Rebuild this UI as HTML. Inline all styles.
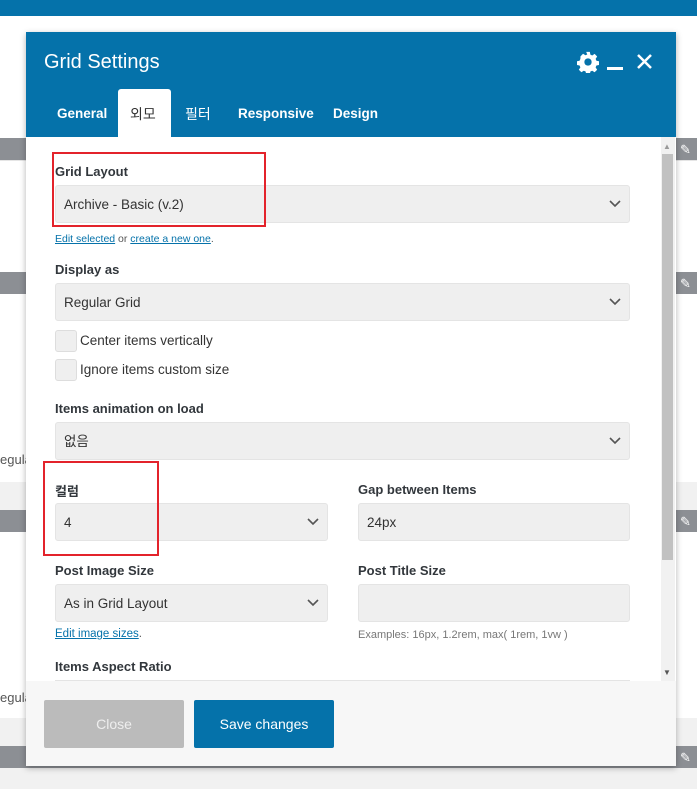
<!DOCTYPE html>
<html><head><style>
body{margin:0;width:697px;height:789px;position:relative;overflow:hidden;background:#f1f1f1;font-family:"Liberation Sans","Noto Sans CJK KR",sans-serif;}
.a{position:absolute}
.lbl{position:absolute;font-size:13px;font-weight:bold;color:#32373c}
.sel{position:absolute;background:#efefef;border:1px solid #e4e4e4;border-radius:3px;height:38px;box-sizing:border-box;font-size:13.5px;color:#333;line-height:38px;padding-left:8px}
.sel svg{position:absolute;right:8px;top:14px}
a{color:#0572aa;text-decoration:underline}
</style></head><body>
<div class="a" style="left:0;top:0;width:697px;height:16px;background:#0572aa"></div>
<div class="a" style="left:0;top:16px;width:697px;height:122px;background:#fff"></div>
<div class="a" style="left:0;top:138px;width:697px;height:22px;background:#8c8f94"></div>
<div class="a" style="left:0;top:160px;width:697px;height:112px;background:#fff;border-top:1px solid #e5e5e5"></div>
<div class="a" style="left:0;top:272px;width:697px;height:22px;background:#8c8f94"></div>
<div class="a" style="left:0;top:294px;width:697px;height:216px;background:#fff"></div>
<div class="a" style="left:0;top:452px;font-size:13px;color:#555">egula</div>
<div class="a" style="left:0;top:482px;width:697px;height:28px;background:#f1f1f1"></div>
<div class="a" style="left:0;top:510px;width:697px;height:22px;background:#8c8f94"></div>
<div class="a" style="left:0;top:532px;width:697px;height:214px;background:#fff"></div>
<div class="a" style="left:0;top:690px;font-size:13px;color:#555">egula</div>
<div class="a" style="left:0;top:718px;width:697px;height:28px;background:#f1f1f1"></div>
<div class="a" style="left:0;top:746px;width:697px;height:22px;background:#8c8f94"></div>
<div class="a" style="left:680px;top:142px;color:#fff;font-size:13px">✎</div>
<div class="a" style="left:680px;top:276px;color:#fff;font-size:13px">✎</div>
<div class="a" style="left:680px;top:514px;color:#fff;font-size:13px">✎</div>
<div class="a" style="left:680px;top:750px;color:#fff;font-size:13px">✎</div>

<div class="a" style="left:26px;top:32px;width:650px;height:734px;background:#fff;box-shadow:0 2px 6px rgba(0,0,0,.3)">
 <div class="a" style="left:0;top:0;width:650px;height:105px;background:#0572aa"></div>
 <div class="a" style="left:18px;top:19px;font-size:20px;color:#fff">Grid Settings</div>
 <svg class="a" style="left:551px;top:19px" width="22" height="22" viewBox="0 0 24 24"><path fill="#fff" d="M10 1h4l.6 3 2 .9 2.6-1.7 2.8 2.8-1.7 2.6.9 2 3 .6v4l-3 .6-.9 2 1.7 2.6-2.8 2.8-2.6-1.7-2 .9-.6 3h-4l-.6-3-2-.9-2.6 1.7-2.8-2.8 1.7-2.6-.9-2-3-.6v-4l3-.6.9-2L3.8 5.8 6.6 3l2.6 1.7 2-.9z"/><circle cx="12" cy="12" r="4" fill="#0572aa"/></svg>
 <div class="a" style="left:581px;top:35px;width:16px;height:3px;background:#fff"></div>
 <svg class="a" style="left:610px;top:21px" width="17" height="17"><path d="M2 2L15 15M15 2L2 15" stroke="#fff" stroke-width="2.5"/></svg>
 <div class="a" style="left:92px;top:57px;width:53px;height:48px;background:#fff;border-radius:3px 3px 0 0"></div>
 <div class="a" style="left:31px;top:74px;font-size:13.5px;color:#fff;font-weight:bold">General</div>
 <div class="a" style="left:104px;top:72px;font-size:14px;color:#333">외모</div>
 <div class="a" style="left:159px;top:72px;font-size:14px;color:#fff">필터</div>
 <div class="a" style="left:212px;top:74px;font-size:13.5px;color:#fff;font-weight:bold">Responsive</div>
 <div class="a" style="left:307px;top:74px;font-size:13.5px;color:#fff;font-weight:bold">Design</div>
 <div class="a" style="left:635px;top:105px;width:14px;height:544px;background:#f1f1f1"></div>
 <div class="a" style="left:636px;top:122px;width:11px;height:406px;background:#c1c1c1"></div>
 <div class="a" style="left:637px;top:110px;font-size:8px;color:#999">▲</div>
 <div class="a" style="left:637px;top:636px;font-size:8px;color:#555">▼</div>
 <div class="a" style="left:0;top:649px;width:650px;height:85px;background:#f7f7f7"></div>
 <div class="a" style="left:18px;top:668px;width:140px;height:48px;background:#bbb;border-radius:2px;color:#eee;font-size:14px;text-align:center;line-height:48px">Close</div>
 <div class="a" style="left:168px;top:668px;width:140px;height:48px;background:#0572aa;border-radius:2px;color:#fff;font-size:14px;text-align:center;line-height:48px">Save changes</div>
</div>
<div class="lbl" style="left:55px;top:164px">Grid Layout</div>
<div class="sel" style="left:55px;top:185px;width:575px">Archive - Basic (v.2)<svg width="12" height="8"><path d="M1 1l5 5 5-5" stroke="#555" stroke-width="1.6" fill="none"/></svg></div>
<div class="a" style="left:55px;top:233px;font-size:10.5px;color:#555"><a>Edit selected</a> or <a>create a new one</a>.</div>
<div class="a" style="left:52px;top:152px;width:214px;height:75px;border:2px solid #e3232b;box-sizing:border-box"></div>
<div class="lbl" style="left:55px;top:262px">Display as</div>
<div class="sel" style="left:55px;top:283px;width:575px">Regular Grid<svg width="12" height="8"><path d="M1 1l5 5 5-5" stroke="#555" stroke-width="1.6" fill="none"/></svg></div>
<div class="a" style="left:55px;top:330px;width:20px;height:20px;background:#efefef;border:1px solid #ddd;border-radius:3px"></div>
<div class="a" style="left:80px;top:333px;font-size:13.5px;color:#333">Center items vertically</div>
<div class="a" style="left:55px;top:359px;width:20px;height:20px;background:#efefef;border:1px solid #ddd;border-radius:3px"></div>
<div class="a" style="left:80px;top:362px;font-size:13.5px;color:#333">Ignore items custom size</div>
<div class="lbl" style="left:55px;top:401px">Items animation on load</div>
<div class="sel" style="left:55px;top:422px;width:575px">없음<svg width="12" height="8"><path d="M1 1l5 5 5-5" stroke="#555" stroke-width="1.6" fill="none"/></svg></div>
<div class="lbl" style="left:55px;top:481px">컬럼</div>
<div class="sel" style="left:55px;top:503px;width:273px">4<svg width="12" height="8"><path d="M1 1l5 5 5-5" stroke="#555" stroke-width="1.6" fill="none"/></svg></div>
<div class="a" style="left:43px;top:461px;width:116px;height:95px;border:2px solid #e3232b;box-sizing:border-box"></div>
<div class="lbl" style="left:358px;top:482px">Gap between Items</div>
<div class="sel" style="left:358px;top:503px;width:272px">24px</div>
<div class="lbl" style="left:55px;top:563px">Post Image Size</div>
<div class="sel" style="left:55px;top:584px;width:273px">As in Grid Layout<svg width="12" height="8"><path d="M1 1l5 5 5-5" stroke="#555" stroke-width="1.6" fill="none"/></svg></div>
<div class="a" style="left:55px;top:628px;font-size:11.5px"><a>Edit image sizes</a><span style="color:#555">.</span></div>
<div class="lbl" style="left:358px;top:563px">Post Title Size</div>
<div class="sel" style="left:358px;top:584px;width:272px"></div>
<div class="a" style="left:358px;top:629px;font-size:11px;color:#777">Examples: 16px, 1.2rem, max( 1rem, 1vw )</div>
<div class="lbl" style="left:55px;top:659px">Items Aspect Ratio</div>
<div class="a" style="left:55px;top:680px;width:575px;height:1px;background:#e4e4e4"></div>
</body></html>
